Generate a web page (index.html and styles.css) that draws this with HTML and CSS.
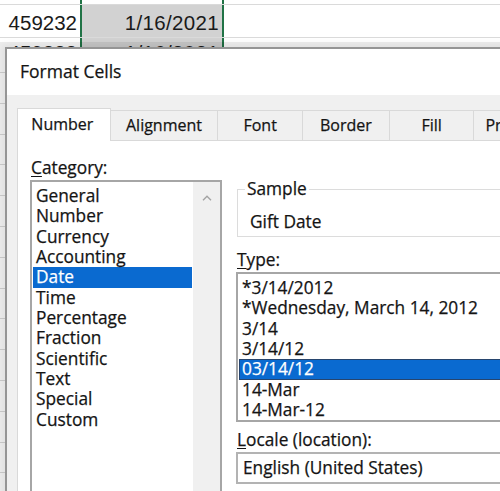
FILE: index.html
```html
<!DOCTYPE html>
<html lang="en">
<head>
<meta charset="utf-8">
<title>Format Cells</title>
<link rel="stylesheet" href="styles.css">
</head>
<body>
<div class="sheet">
  <div class="row r0"><div class="cell a"></div><div class="cell b active"></div><div class="cell c"></div></div>
  <div class="row r1"><div class="cell a">459232</div><div class="cell b sel">1/16/2021</div><div class="cell c"></div></div>
  <div class="row r2"><div class="cell a">459233</div><div class="cell b sel">1/16/2021</div><div class="cell c"></div></div>
  <div class="row"><div class="cell a"></div><div class="cell b"></div><div class="cell c"></div></div>
  <div class="row"><div class="cell a"></div><div class="cell b"></div><div class="cell c"></div></div>
  <div class="row"><div class="cell a"></div><div class="cell b"></div><div class="cell c"></div></div>
  <div class="row"><div class="cell a"></div><div class="cell b"></div><div class="cell c"></div></div>
  <div class="row"><div class="cell a"></div><div class="cell b"></div><div class="cell c"></div></div>
  <div class="row"><div class="cell a"></div><div class="cell b"></div><div class="cell c"></div></div>
  <div class="row"><div class="cell a"></div><div class="cell b"></div><div class="cell c"></div></div>
  <div class="row"><div class="cell a"></div><div class="cell b"></div><div class="cell c"></div></div>
  <div class="row"><div class="cell a"></div><div class="cell b"></div><div class="cell c"></div></div>
  <div class="row"><div class="cell a"></div><div class="cell b"></div><div class="cell c"></div></div>
  <div class="row"><div class="cell a"></div><div class="cell b"></div><div class="cell c"></div></div>
  <div class="row"><div class="cell a"></div><div class="cell b"></div><div class="cell c"></div></div>
  <div class="row"><div class="cell a"></div><div class="cell b"></div><div class="cell c"></div></div>
</div>

<div class="dialog">
  <div class="titlebar">Format Cells</div>
  <div class="dlg-body">
    <div class="tabs">
      <div class="tab tab-number current">Number</div>
      <div class="tab tab-align">Alignment</div>
      <div class="tab tab-font">Font</div>
      <div class="tab tab-border">Border</div>
      <div class="tab tab-fill">Fill</div>
      <div class="tab tab-prot">Protection</div>
    </div>
    <div class="page">
      <div class="col-left">
        <div class="label"><u>C</u>ategory:</div>
        <div class="listbox cat">
          <ul class="items">
            <li>General</li>
            <li>Number</li>
            <li>Currency</li>
            <li>Accounting</li>
            <li class="selected">Date</li>
            <li>Time</li>
            <li>Percentage</li>
            <li>Fraction</li>
            <li>Scientific</li>
            <li>Text</li>
            <li>Special</li>
            <li>Custom</li>
          </ul>
          <div class="scrollbar">
            <svg class="arrow" width="10" height="6" viewBox="0 0 10 6"><path d="M1 5.2 L5 1.2 L9 5.2" fill="none" stroke="#a3a3a3" stroke-width="1.4"/></svg>
          </div>
        </div>
      </div>
      <div class="col-right">
        <fieldset class="sample">
          <legend>Sample</legend>
          <div class="sample-value">Gift Date</div>
        </fieldset>
        <div class="label type-label"><u>T</u>ype:</div>
        <div class="listbox types">
          <ul class="items">
            <li>*3/14/2012</li>
            <li>*Wednesday, March 14, 2012</li>
            <li>3/14</li>
            <li>3/14/12</li>
            <li class="selected focus">03/14/12</li>
            <li>14-Mar</li>
            <li>14-Mar-12</li>
          </ul>
        </div>
        <div class="label locale-label"><u>L</u>ocale (location):</div>
        <div class="combo">English (United States)</div>
      </div>
    </div>
  </div>
</div>
</body>
</html>
```
FILE: styles.css
```css
html, body {
  margin: 0;
  padding: 0;
  width: 500px;
  height: 491px;
  overflow: hidden;
  background: #ffffff;
}

body {
  position: relative;
  font-family: "Open Sans", "Noto Sans", sans-serif;
  color: #141414;
}

/* spreadsheet behind the dialog */
.sheet {
  display: flex;
  flex-direction: column;
  font-family: "Liberation Sans", Arial, sans-serif;
  font-size: 20.5px;
  color: #1a1a1a;
}

.row {
  display: grid;
  grid-template-columns: 80px 144px 1fr;
  height: 30.8px;
  border-bottom: 1px solid #dadada;
  box-sizing: border-box;
}

.row.r0 { height: 5px; }
.row.r1 { height: 33px; }
.row.r2 { height: 35px; }

.cell {
  box-sizing: border-box;
  display: flex;
  justify-content: flex-end;
  align-items: flex-end;
  padding-right: 3px;
  line-height: 23px;
}

.cell.b { letter-spacing: 0.35px; }

.r1 .cell { padding-bottom: 3px; }
.r2 .cell { align-items: flex-start; padding-top: 3px; }

.cell.b {
  border-left: 2px solid #217346;
  border-right: 2px solid #217346;
}

.cell.b.sel { background: #d2d2d2; }

/* dialog */
.dialog {
  position: absolute;
  left: 5px;
  top: 47px;
  width: 600px;
  height: 480px;
  box-sizing: border-box;
  border: 2px solid #959595;
  background: #f0f0f0;
  box-shadow: 0 0 0 5px rgba(0, 0, 0, 0.07), 0 0 8px 3px rgba(0, 0, 0, 0.06);
  -webkit-text-stroke: 0.25px currentColor;
}

.titlebar {
  height: 46px;
  background: #ffffff;
  padding-left: 13px;
  font-size: 17.5px;
  line-height: 44px;
  color: #141414;
}

.dlg-body {
  padding-top: 13px;
}

.tabs {
  display: flex;
  align-items: flex-end;
  padding-left: 10px;
  height: 32px;
}

.tab {
  box-sizing: border-box;
  height: 30px;
  border: 1px solid #d9d9d9;
  border-bottom: 0;
  background: #f0f0f0;
  margin-left: -1px;
  font-size: 16px;
  line-height: 28px;
  text-align: center;
  color: #141414;
}

.tab.current {
  position: relative;
  z-index: 1;
  height: 33px;
  margin-bottom: -1px;
  margin-left: 0;
  background: #ffffff;
  line-height: 31px;
  padding-right: 3px;
}

.tab-number { width: 94px; }
.tab-align { width: 109px; }
.tab-font { width: 86px; }
.tab-border { width: 88px; }
.tab-fill { width: 86px; }
.tab-prot { width: 130px; text-align: left; padding-left: 11px; }

.page {
  margin-left: 10px;
  height: 400px;
  background: #ffffff;
  border: 1px solid #d9d9d9;
  padding: 16px 0 0 12px;
  display: grid;
  grid-template-columns: 192px 1fr;
  column-gap: 14px;
  align-items: start;
}

.label {
  font-size: 17.3px;
  line-height: 22px;
  height: 22px;
  padding-left: 1px;
  color: #141414;
}

.label u {
  text-decoration-thickness: 1px;
  text-underline-offset: 2px;
}

.listbox {
  box-sizing: border-box;
  border: 2px solid #a6a6a6;
  background: #ffffff;
  margin-top: 1px;
}

.items {
  list-style: none;
  margin: 0;
  padding: 4px 0 0 0;
}

.items li {
  height: 20.35px;
  line-height: 20.35px;
  font-size: 17.3px;
  padding-left: 3px;
  margin: 0 1px;
  white-space: nowrap;
  color: #141414;
}

.items li.selected {
  background: #0a6ad0;
  color: #ffffff;
}

.items li.focus {
  box-shadow: inset 0 0 0 1px #27456e;
}

.listbox.cat {
  height: 330px;
  display: grid;
  grid-template-columns: 161px 27px;
}

.scrollbar {
  background: #f0f0f0;
  display: flex;
  justify-content: center;
  padding-top: 13px;
  padding-left: 1px;
}

.arrow { display: block; }

.col-right {
  display: flex;
  flex-direction: column;
}

.sample {
  margin: 21px 0 0 1px;
  padding: 0 0 3px 12px;
  border: 1px solid #dcdcdc;
  min-width: 0;
}

.sample legend {
  font-size: 17.3px;
  line-height: 22px;
  padding: 0 2px;
  margin-left: -5px;
}

.sample-value {
  font-size: 17.3px;
  line-height: 22px;
  margin-top: 11px;
}

.type-label { margin-top: 12px; }

.listbox.types {
  height: 150px;
}

.locale-label { margin-top: 7px; }

.combo {
  box-sizing: border-box;
  height: 32px;
  margin-top: 1px;
  border: 2px solid #b3b3b3;
  padding-left: 5px;
  font-size: 17.3px;
  line-height: 28px;
  color: #141414;
}
```
